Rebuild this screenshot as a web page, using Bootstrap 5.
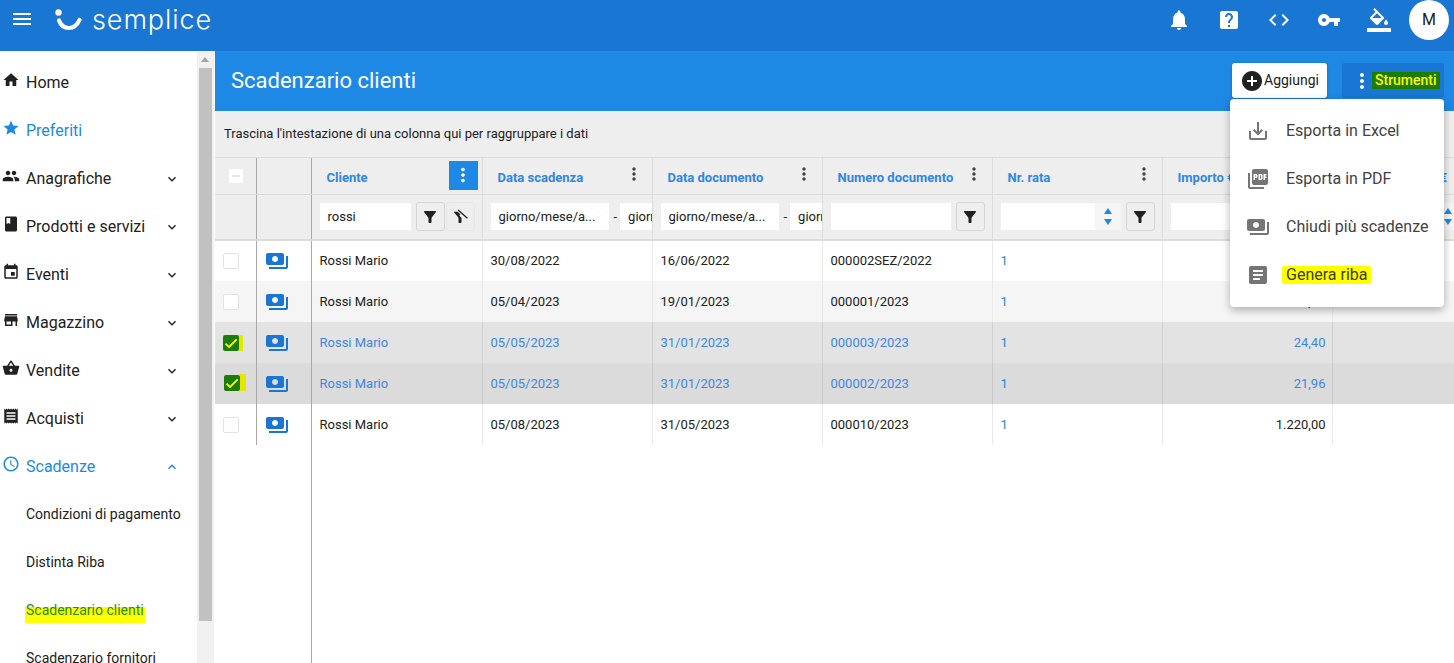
<!DOCTYPE html>
<html lang="it">
<head>
<meta charset="utf-8">
<title>Scadenzario clienti</title>
<link href="https://cdn.jsdelivr.net/npm/bootstrap@5.3.0/dist/css/bootstrap.min.css" rel="stylesheet">
<style>
html,body{height:100%;overflow:hidden}
body{font-family:Roboto,"Liberation Sans",sans-serif;color:#212121;background:#fff;font-size:13px}
.ic{fill:currentColor;flex:none;display:block}
.shell{height:663px;width:1454px}
.topbar{height:51px;background:#1976d2;color:#fff;flex:none}
.burger{margin-left:10px;margin-right:21px;margin-top:-13px}
.logo-wrap{margin-top:-11px}
.logo-word{font-family:Inter,"Open Sans",sans-serif;font-weight:300;font-size:27px;line-height:1;letter-spacing:.9px;margin-left:9px;color:#fff;position:relative;top:-1px}
.top-icons{margin-top:-12px}
.top-ic{width:50px;display:flex;justify-content:center}
.avatar{width:40px;height:40px;border-radius:50%;background:#fff;color:#212121;font-size:16px;margin:-12px 5px 0 5px;flex:none}
.side{width:215px;flex:none;position:relative;overflow:hidden;background:#fff}
.side-list{padding-top:7px;width:197px}
.side-it{height:48px;display:flex;align-items:center;font-size:16px;color:#212121;padding-left:2px;position:relative}
.side-it svg.lead{margin-top:-4px}
.side-it .lbl{margin-left:6px;position:relative;top:1px}
.side-it.act{color:#1e88e5}
.side-it .chev{position:absolute;left:164px;top:17px}
.sub-it{height:48px;display:flex;align-items:center;font-size:14px;padding-left:26px}
.hl-side{align-self:flex-start;margin-top:17px;height:20px;line-height:14px;padding:0 1px;margin-left:-1px;background:linear-gradient(transparent 4px,#ffff00 4px);color:#2a8a2a}
.sbar{position:absolute;left:197px;top:0;bottom:0;width:17px;background:#f1f1f1}
.sthumb{position:absolute;left:2px;right:2px;top:17px;height:553px;background:#c1c1c1}
.sarrow{position:absolute;left:4px;top:6px;width:0;height:0;border-left:4px solid transparent;border-right:4px solid transparent;border-bottom:5px solid #a3a3a3}
.main{min-width:0;position:relative}
.titlebar{height:60px;background:#1e88e5;color:#fff;flex:none;padding:0 10px 0 16px}
.titlebar h1{font-size:22px;font-weight:400;margin:0}
.btn-add{width:95px;height:35px;background:#fff;color:#212121;border:0;border-radius:3px;font-size:14px;padding:0 0 0 9px;box-shadow:0 1px 3px rgba(0,0,0,.25);margin-right:15px}
.btn-str{width:102px;height:35px;background:#1976d2;color:#fff;border:0;border-radius:3px;font-size:14px;padding:0 0 0 8px}
.hl-str{background:#1d7c02;color:#ffff00;padding:1px 3px;line-height:15px;margin-left:-2px;font-weight:500}
.grouping{height:47px;background:#eee;flex:none;padding-left:9px;font-size:13px;color:#212121;border-bottom:1px solid #dcdcdc}
.grid-wrap{min-height:0;overflow:hidden;width:1239px}
.gridt{table-layout:fixed;width:1287px;margin:0;border-collapse:collapse;font-size:13px;--bs-table-bg:transparent;flex:none}
.gridt td,.gridt th{padding:0;border:0;border-right:1px solid #e9e9e9;vertical-align:middle;white-space:nowrap;overflow:hidden;box-shadow:none}
.gridt thead th{background:#eee;border-right:1px solid #dcdcdc;border-bottom:1px solid #dcdcdc;color:#2f86e5;font-weight:700;font-size:13px}
.gridt .r-h1{height:36px}
.gridt .r-h2{height:46px}
.gridt .r-h2 th{border-bottom:2px solid #dcdcdc}
.gridt tbody tr{height:41px}
.gridt td.fr1,.gridt th.fr1,.gridt td.fr2,.gridt th.fr2{border-right:1px solid #a9a9a9}
.gridt td.tx{padding-left:8px}
.gridt td.num{padding-right:6px;text-align:right}
.gridt tr.r-w td{background:#fff;color:#212121}
.gridt tr.r-a td{background:#f5f5f5;color:#212121}
.gridt tr.r-s td{background:#e3e3e3;color:#3f86e0;border-right-color:#d0d0d0}
.gridt tr.r-t td{background:#dbdbdb;color:#3f86e0;border-right-color:#c9c9c9}
.gridt tr td.rata{color:#1e88e5}
.gridt tr td.fr1,.gridt tr td.fr2{border-right-color:#a9a9a9}
.hd{height:35px;padding:3px 0 0 15px}
.hd-kebab{width:30px;height:30px;color:#424242;margin-right:3px;position:relative;top:-3px}
.hd-kebab.on{background:#1e88e5;color:#fff;top:-2px;width:29px;height:29px;margin-right:4px}
.flt{height:44px;padding:0 8px;gap:5px;color:#212121}
.f-in{height:27px;background:#fff;border:0;font-weight:400;font-size:13px;line-height:27px;padding-left:8px;color:#212121;flex:none;overflow:hidden}
.f-btn{width:29px;height:29px;border:1px solid #d5d5d5;border-radius:3px;background:#eee;color:#212121;flex:none}
.f-btn.off{border-color:#e6e6e6;margin-left:-4px}
.spin{width:26px;height:27px;background:#f5f5f5;margin-left:-5px;flex:none;gap:5px}
.tri-u{width:0;height:0;border-left:4px solid transparent;border-right:4px solid transparent;border-bottom:6px solid #1e88e5}
.tri-d{width:0;height:0;border-left:4px solid transparent;border-right:4px solid transparent;border-top:6px solid #1e88e5}
.dash{font-weight:400;margin-right:-2px}
.cb{width:16px;height:16px;border:1px solid #e3e3e3;border-radius:2px;background:#fff;display:block;margin:0 auto 0 8px}
.cb-h{width:14px;height:14px;border:0;margin-left:14px;position:relative}
.cb-h::after{content:"";position:absolute;left:3px;right:3px;top:6px;height:2px;background:#e8e8e8}
.cb-on{position:relative;border:0;background:#1d7c02;width:16px;height:16px;color:#ff0}
.cb-on::after{content:"";position:absolute;left:100%;top:0;width:4px;bottom:0;background:#e6e600}
.cb-on.wide{margin-left:9px;top:-1px}
.cb-on.wide::after{width:6px;top:-1px}
.cash{color:#1976d2;margin-left:8px}
.fill{width:97px;flex:1;border-right:1px solid #a9a9a9;background:#fff}
.tools-menu{position:absolute;left:1015px;top:48px;width:214px;height:208px;background:#fff;border-radius:4px;box-shadow:0 3px 8px rgba(0,0,0,.3);padding-top:8px;z-index:5}
.tm-it{height:48px;display:flex;align-items:center;font-size:16px;color:#424242;padding-left:16px}
.tm-it svg{color:#757575;margin-right:16px}
.hl-rib{background:#ffff00;padding:0 4px;margin-left:-4px;border-radius:2px;line-height:18px;color:#3d3d00}
</style>
</head>
<body>
<svg width="0" height="0" class="position-absolute">
<defs>
<symbol id="i-menu" viewBox="0 0 24 24"><path d="M3 18h18v-2H3v2zm0-5h18v-2H3v2zm0-7v2h18V6H3z"/></symbol>
<symbol id="i-home" viewBox="0 0 24 24"><path d="M10 20v-6h4v6h5v-8h3L12 3 2 12h3v8z"/></symbol>
<symbol id="i-star" viewBox="0 0 24 24"><path d="M12 17.27L18.18 21l-1.64-7.03L22 9.24l-7.19-.61L12 2 9.19 8.63 2 9.24l5.46 4.73L5.82 21z"/></symbol>
<symbol id="i-people" viewBox="0 0 24 24"><path d="M16 11c1.66 0 2.99-1.34 2.99-3S17.66 5 16 5c-1.66 0-3 1.34-3 3s1.34 3 3 3zm-8 0c1.66 0 2.99-1.34 2.99-3S9.66 5 8 5C6.34 5 5 6.34 5 8s1.34 3 3 3zm0 2c-2.33 0-7 1.17-7 3.5V19h14v-2.5c0-2.33-4.67-3.5-7-3.5zm8 0c-.29 0-.62.02-.97.05 1.16.84 1.97 1.97 1.97 3.45V19h6v-2.5c0-2.33-4.67-3.5-7-3.5z"/></symbol>
<symbol id="i-book" viewBox="0 0 24 24"><path d="M18 2H6c-1.1 0-2 .9-2 2v16c0 1.1.9 2 2 2h12c1.1 0 2-.9 2-2V4c0-1.1-.9-2-2-2zM6 4h5v8l-2.5-1.5L6 12V4z"/></symbol>
<symbol id="i-event" viewBox="0 0 24 24"><path d="M17 12h-5v5h5v-5zM16 1v2H8V1H6v2H5c-1.11 0-1.99.9-1.99 2L3 19c0 1.1.89 2 2 2h14c1.1 0 2-.9 2-2V5c0-1.1-.9-2-2-2h-1V1h-2zm3 18H5V8h14v11z"/></symbol>
<symbol id="i-store" viewBox="0 0 24 24"><path d="M20 4H4v2h16V4zm1 10v-2l-1-5H4l-1 5v2h1v6h10v-6h4v6h2v-6h1zm-9 4H6v-4h6v4z"/></symbol>
<symbol id="i-basket" viewBox="0 0 24 24"><path d="M17.21 9l-4.38-6.56c-.19-.28-.51-.42-.83-.42-.32 0-.64.14-.83.43L6.79 9H2c-.55 0-1 .45-1 1 0 .09.01.18.04.27l2.54 9.27c.23.84 1 1.46 1.92 1.46h13c.92 0 1.69-.62 1.93-1.46l2.54-9.27L23 10c0-.55-.45-1-1-1h-4.79zM9 9l3-4.4L15 9H9zm3 8c-1.1 0-2-.9-2-2s.9-2 2-2 2 .9 2 2-.9 2-2 2z"/></symbol>
<symbol id="i-receipt" viewBox="0 0 24 24"><path d="M18 17H6v-2h12v2zm0-4H6v-2h12v2zm0-4H6V7h12v2zM3 22l1.5-1.5L6 22l1.5-1.5L9 22l1.5-1.5L12 22l1.5-1.5L15 22l1.5-1.5L18 22l1.5-1.5L21 22V2l-1.5 1.5L18 2l-1.5 1.5L15 2l-1.5 1.5L12 2l-1.5 1.5L9 2 7.5 3.5 6 2 4.5 3.5 3 2v20z"/></symbol>
<symbol id="i-clock" viewBox="0 0 24 24"><path d="M11.99 2C6.47 2 2 6.48 2 12s4.47 10 9.99 10C17.52 22 22 17.52 22 12S17.52 2 11.99 2zM12 20c-4.42 0-8-3.58-8-8s3.58-8 8-8 8 3.58 8 8-3.58 8-8 8zm.5-13H11v6l5.25 3.15.75-1.23-4.5-2.67z"/></symbol>
<symbol id="i-more" viewBox="0 0 24 24"><path d="M16.59 8.59L12 13.17 7.41 8.59 6 10l6 6 6-6z"/></symbol>
<symbol id="i-less" viewBox="0 0 24 24"><path d="M12 8l-6 6 1.41 1.41L12 10.83l4.59 4.58L18 14z"/></symbol>
<symbol id="i-bell" viewBox="0 0 24 24"><path d="M12 22c1.1 0 2-.9 2-2h-4c0 1.1.89 2 2 2zm6-6v-5c0-3.07-1.64-5.64-4.5-6.32V4c0-.83-.67-1.5-1.5-1.5s-1.5.67-1.5 1.5v.68C7.63 5.36 6 7.92 6 11v5l-2 2v1h16v-1l-2-2z"/></symbol>
<symbol id="i-help" viewBox="0 0 24 24"><path d="M19 3H5c-1.1 0-2 .9-2 2v14c0 1.1.9 2 2 2h14c1.1 0 2-.9 2-2V5c0-1.1-.9-2-2-2zm-6 16h-2v-2h2v2zm2.07-7.75l-.9.92C13.45 12.9 13 13.5 13 15h-2v-.5c0-1.1.45-2.1 1.17-2.83l1.24-1.26c.37-.36.59-.86.59-1.41 0-1.1-.9-2-2-2s-2 .9-2 2H8c0-2.21 1.79-4 4-4s4 1.79 4 4c0 .88-.36 1.68-.93 2.25z"/></symbol>
<symbol id="i-code" viewBox="0 0 24 24"><path d="M9.4 16.6L4.8 12l4.6-4.6L8 6l-6 6 6 6 1.4-1.4zm5.2 0l4.6-4.6-4.6-4.6L16 6l6 6-6 6-1.4-1.4z"/></symbol>
<symbol id="i-key" viewBox="0 0 24 24"><path d="M12.65 10C11.83 7.67 9.61 6 7 6c-3.31 0-6 2.69-6 6s2.69 6 6 6c2.61 0 4.83-1.67 5.65-4H17v4h4v-4h2v-4H12.65zM7 14c-1.1 0-2-.9-2-2s.9-2 2-2 2 .9 2 2-.9 2-2 2z"/></symbol>
<symbol id="i-fill" viewBox="0 0 24 24"><path d="M16.56 8.94L7.62 0 6.21 1.41l2.38 2.38-5.15 5.15c-.59.59-.59 1.54 0 2.12l5.5 5.5c.29.29.68.44 1.06.44s.77-.15 1.06-.44l5.5-5.5c.59-.58.59-1.53 0-2.12zM5.21 10L10 5.21 14.79 10H5.21zM19 11.5s-2 2.17-2 3.5c0 1.1.9 2 2 2s2-.9 2-2c0-1.33-2-3.5-2-3.5z"/><path d="M0 20h24v4H0z"/></symbol>
<symbol id="i-add" viewBox="0 0 24 24"><path d="M12 2C6.48 2 2 6.48 2 12s4.48 10 10 10 10-4.48 10-10S17.52 2 12 2zm5 11h-4v4h-2v-4H7v-2h4V7h2v4h4v2z"/></symbol>
<symbol id="i-kebab" viewBox="0 0 24 24"><path d="M12 8c1.1 0 2-.9 2-2s-.9-2-2-2-2 .9-2 2 .9 2 2 2zm0 2c-1.1 0-2 .9-2 2s.9 2 2 2 2-.9 2-2-.9-2-2-2zm0 6c-1.1 0-2 .9-2 2s.9 2 2 2 2-.9 2-2-.9-2-2-2z"/></symbol>
<symbol id="i-filter" viewBox="0 0 24 24"><path d="M4.25 5.61C6.27 8.2 10 13 10 13v6c0 .55.45 1 1 1h2c.55 0 1-.45 1-1v-6s3.72-4.8 5.74-7.39C20.25 4.95 19.78 4 18.95 4H5.04c-.83 0-1.3.95-.79 1.61z"/></symbol>
<symbol id="i-filter-off" viewBox="0 0 24 24"><path d="M3.500 5H9l3.500 3.500L11 10l3 3v6c0 .55-.45 1-1 1h-2c-.55 0-1-.45-1-1v-6z"/><path d="M10 2l12.500 11-1.200 1.400L8.800 3.400z"/></symbol>
<symbol id="i-save" viewBox="0 0 24 24"><path d="M19 12v7H5v-7H3v7c0 1.1.9 2 2 2h14c1.1 0 2-.9 2-2v-7h-2zm-6 .67l2.59-2.58L17 11.5l-5 5-5-5 1.41-1.41L11 12.67V3h2z"/></symbol>
<symbol id="i-pdf" viewBox="0 0 24 24"><path d="M20 2H8c-1.1 0-2 .9-2 2v12c0 1.1.9 2 2 2h12c1.1 0 2-.9 2-2V4c0-1.1-.9-2-2-2zm-8.5 7.5c0 .83-.67 1.5-1.5 1.5H9v2H7.5V7H10c.83 0 1.5.67 1.5 1.5v1zm5 2c0 .83-.67 1.5-1.5 1.5h-2.5V7H15c.83 0 1.5.67 1.5 1.5v3zm4-3H19v1h1.5V11H19v2h-1.5V7h3v1.5zM9 9.5h1v-1H9v1zM4 6H2v14c0 1.1.9 2 2 2h14v-2H4V6zm10 5.5h1v-3h-1v3z"/></symbol>
<symbol id="i-cash" viewBox="0 0 24 24"><path d="M19 14V6c0-1.1-.9-2-2-2H3c-1.1 0-2 .9-2 2v8c0 1.1.9 2 2 2h14c1.1 0 2-.9 2-2zm-9-1c-1.66 0-3-1.34-3-3s1.34-3 3-3 3 1.34 3 3-1.34 3-3 3zm13-6v11c0 1.1-.9 2-2 2H4v-2h17V7h2z"/></symbol>
<symbol id="i-article" viewBox="0 0 24 24"><path d="M19 3H5c-1.1 0-2 .9-2 2v14c0 1.1.9 2 2 2h14c1.1 0 2-.9 2-2V5c0-1.1-.9-2-2-2zm-5 14H7v-2h7v2zm3-4H7v-2h10v2zm0-4H7V7h10v2z"/></symbol>
<symbol id="i-check" viewBox="0 0 24 24"><path d="M9 16.2L4.8 12l-1.9 1.9L9 20 21.5 7.5 19.6 5.6z"/></symbol>
</defs>
</svg>
<div class="shell d-flex flex-column">
  <header class="topbar d-flex align-items-center">
    <svg class="ic burger" width="24" height="24"><use href="#i-menu"/></svg>
    <div class="logo-wrap d-flex align-items-center">
      <svg width="28" height="22" viewBox="0 0 28 22"><circle cx="3.500" cy="3.500" r="3.200" fill="#fff"/><path d="M4 11.500c2 5.500 6 7.500 10 7.500s8-2.500 10.500-8" fill="none" stroke="#fff" stroke-width="4.200" stroke-linecap="round"/></svg>
      <span class="logo-word">semplice</span>
    </div>
    <div class="top-icons d-flex align-items-center ms-auto">
      <div class="top-ic"><svg class="ic" width="24" height="24"><use href="#i-bell"/></svg></div>
      <div class="top-ic"><svg class="ic" width="24" height="24"><use href="#i-help"/></svg></div>
      <div class="top-ic"><svg class="ic" width="24" height="24"><use href="#i-code"/></svg></div>
      <div class="top-ic"><svg class="ic" width="24" height="24"><use href="#i-key"/></svg></div>
      <div class="top-ic"><svg class="ic" width="24" height="24"><use href="#i-fill"/></svg></div>
    </div>
    <div class="avatar d-flex align-items-center justify-content-center">M</div>
  </header>
  <div class="d-flex flex-grow-1" style="min-height:0">
    <nav class="side">
      <div class="side-list">
        <div class="side-it"><svg class="ic lead" width="18" height="18"><use href="#i-home"/></svg><span class="lbl">Home</span></div>
        <div class="side-it act"><svg class="ic lead" width="18" height="18"><use href="#i-star"/></svg><span class="lbl">Preferiti</span></div>
        <div class="side-it"><svg class="ic lead" width="18" height="18"><use href="#i-people"/></svg><span class="lbl">Anagrafiche</span><svg class="ic chev" width="16" height="16"><use href="#i-more"/></svg></div>
        <div class="side-it"><svg class="ic lead" width="18" height="18"><use href="#i-book"/></svg><span class="lbl">Prodotti e servizi</span><svg class="ic chev" width="16" height="16"><use href="#i-more"/></svg></div>
        <div class="side-it"><svg class="ic lead" width="18" height="18"><use href="#i-event"/></svg><span class="lbl">Eventi</span><svg class="ic chev" width="16" height="16"><use href="#i-more"/></svg></div>
        <div class="side-it"><svg class="ic lead" width="18" height="18"><use href="#i-store"/></svg><span class="lbl">Magazzino</span><svg class="ic chev" width="16" height="16"><use href="#i-more"/></svg></div>
        <div class="side-it"><svg class="ic lead" width="18" height="18"><use href="#i-basket"/></svg><span class="lbl">Vendite</span><svg class="ic chev" width="16" height="16"><use href="#i-more"/></svg></div>
        <div class="side-it"><svg class="ic lead" width="18" height="18"><use href="#i-receipt"/></svg><span class="lbl">Acquisti</span><svg class="ic chev" width="16" height="16"><use href="#i-more"/></svg></div>
        <div class="side-it act"><svg class="ic lead" width="18" height="18"><use href="#i-clock"/></svg><span class="lbl">Scadenze</span><svg class="ic chev" width="16" height="16"><use href="#i-less"/></svg></div>
        <div class="sub-it">Condizioni di pagamento</div>
        <div class="sub-it">Distinta Riba</div>
        <div class="sub-it"><span class="hl-side">Scadenzario clienti</span></div>
        <div class="sub-it">Scadenzario fornitori</div>
      </div>
      <div class="sbar"><div class="sarrow"></div><div class="sthumb"></div></div>
    </nav>
    <main class="main flex-grow-1 d-flex flex-column">
      <div class="titlebar d-flex align-items-center">
        <h1>Scadenzario clienti</h1>
        <div class="ms-auto d-flex align-items-center" style="margin-top:-1px">
          <button class="btn-add d-flex align-items-center" type="button"><svg class="ic" width="24" height="24" style="margin-left:-1px"><use href="#i-add"/></svg>Aggiungi</button>
          <button class="btn-str d-flex align-items-center" type="button"><svg class="ic" width="24" height="24"><use href="#i-kebab"/></svg><span class="hl-str">Strumenti</span></button>
        </div>
      </div>
      <div class="grouping d-flex align-items-center">Trascina l'intestazione di una colonna qui per raggruppare i dati</div>
      <div class="grid-wrap d-flex flex-column flex-grow-1">
        <table class="table gridt">
          <colgroup><col style="width:41px"><col style="width:55px"><col style="width:171px"><col style="width:170px"><col style="width:170px"><col style="width:170px"><col style="width:170px"><col style="width:170px"><col style="width:170px"></colgroup>
          <thead>
            <tr class="r-h1">
              <th class="fr1"><span class="cb cb-h"></span></th>
              <th class="fr2"></th>
              <th><div class="hd d-flex align-items-center justify-content-between"><span>Cliente</span><span class="hd-kebab on d-flex align-items-center justify-content-center"><svg class="ic" width="22" height="22"><use href="#i-kebab"/></svg></span></div></th>
              <th><div class="hd d-flex align-items-center justify-content-between"><span>Data scadenza</span><span class="hd-kebab d-flex align-items-center justify-content-center"><svg class="ic" width="20" height="20"><use href="#i-kebab"/></svg></span></div></th>
              <th><div class="hd d-flex align-items-center justify-content-between"><span>Data documento</span><span class="hd-kebab d-flex align-items-center justify-content-center"><svg class="ic" width="20" height="20"><use href="#i-kebab"/></svg></span></div></th>
              <th><div class="hd d-flex align-items-center justify-content-between"><span>Numero documento</span><span class="hd-kebab d-flex align-items-center justify-content-center"><svg class="ic" width="20" height="20"><use href="#i-kebab"/></svg></span></div></th>
              <th><div class="hd d-flex align-items-center justify-content-between"><span>Nr. rata</span><span class="hd-kebab d-flex align-items-center justify-content-center"><svg class="ic" width="20" height="20"><use href="#i-kebab"/></svg></span></div></th>
              <th><div class="hd d-flex align-items-center"><span>Importo €</span></div></th>
              <th><div class="hd d-flex align-items-center"><span style="margin-left:56px">Saldo €</span></div></th>
            </tr>
            <tr class="r-h2">
              <th class="fr1"></th>
              <th class="fr2"></th>
              <th><div class="flt d-flex align-items-center"><span class="f-in" style="width:91px">rossi</span><span class="f-btn d-flex align-items-center justify-content-center"><svg class="ic" width="18" height="18"><use href="#i-filter"/></svg></span><span class="f-btn off d-flex align-items-center justify-content-center"><svg class="ic" width="18" height="18"><use href="#i-filter-off"/></svg></span></div></th>
              <th><div class="flt d-flex align-items-center"><span class="f-in" style="width:118px">giorno/mese/a...</span><span class="dash">-</span><span class="f-in" style="width:60px">giorno</span></div></th>
              <th><div class="flt d-flex align-items-center"><span class="f-in" style="width:118px">giorno/mese/a...</span><span class="dash">-</span><span class="f-in" style="width:60px">giorno</span></div></th>
              <th><div class="flt d-flex align-items-center"><span class="f-in" style="width:120px"></span><span class="f-btn d-flex align-items-center justify-content-center"><svg class="ic" width="18" height="18"><use href="#i-filter"/></svg></span></div></th>
              <th><div class="flt d-flex align-items-center"><span class="f-in" style="width:94px"></span><span class="spin d-flex flex-column align-items-center justify-content-center"><span class="tri-u"></span><span class="tri-d"></span></span><span class="f-btn d-flex align-items-center justify-content-center"><svg class="ic" width="18" height="18"><use href="#i-filter"/></svg></span></div></th>
              <th><div class="flt d-flex align-items-center"><span class="f-in" style="width:94px"></span><span class="spin d-flex flex-column align-items-center justify-content-center"><span class="tri-u"></span><span class="tri-d"></span></span></div></th>
              <th><div class="flt d-flex align-items-center"><span class="f-in" style="width:94px"></span><span class="spin d-flex flex-column align-items-center justify-content-center"><span class="tri-u"></span><span class="tri-d"></span></span></div></th>
            </tr>
          </thead>
          <tbody>
            <tr class="r-w"><td class="fr1"><span class="cb"></span></td><td class="fr2"><svg class="ic cash" width="24" height="24"><use href="#i-cash"/></svg></td><td class="tx">Rossi Mario</td><td class="tx">30/08/2022</td><td class="tx">16/06/2022</td><td class="tx">000002SEZ/2022</td><td class="tx rata">1</td><td class="num">61,00</td><td></td></tr>
            <tr class="r-a"><td class="fr1"><span class="cb"></span></td><td class="fr2"><svg class="ic cash" width="24" height="24"><use href="#i-cash"/></svg></td><td class="tx">Rossi Mario</td><td class="tx">05/04/2023</td><td class="tx">19/01/2023</td><td class="tx">000001/2023</td><td class="tx rata">1</td><td class="num">36,60</td><td></td></tr>
            <tr class="r-s"><td class="fr1"><span class="cb cb-on"><svg class="ic" width="16" height="16"><use href="#i-check"/></svg></span></td><td class="fr2"><svg class="ic cash" width="24" height="24"><use href="#i-cash"/></svg></td><td class="tx">Rossi Mario</td><td class="tx">05/05/2023</td><td class="tx">31/01/2023</td><td class="tx">000003/2023</td><td class="tx rata">1</td><td class="num">24,40</td><td></td></tr>
            <tr class="r-t"><td class="fr1"><span class="cb cb-on wide"><svg class="ic" width="16" height="16"><use href="#i-check"/></svg></span></td><td class="fr2"><svg class="ic cash" width="24" height="24"><use href="#i-cash"/></svg></td><td class="tx">Rossi Mario</td><td class="tx">05/05/2023</td><td class="tx">31/01/2023</td><td class="tx">000002/2023</td><td class="tx rata">1</td><td class="num">21,96</td><td></td></tr>
            <tr class="r-w"><td class="fr1"><span class="cb"></span></td><td class="fr2"><svg class="ic cash" width="24" height="24"><use href="#i-cash"/></svg></td><td class="tx">Rossi Mario</td><td class="tx">05/08/2023</td><td class="tx">31/05/2023</td><td class="tx">000010/2023</td><td class="tx rata">1</td><td class="num">1.220,00</td><td></td></tr>
          </tbody>
        </table>
        <div class="fill"></div>
      </div>
      <div class="tools-menu">
        <div class="tm-it"><svg class="ic" width="24" height="24"><use href="#i-save"/></svg>Esporta in Excel</div>
        <div class="tm-it"><svg class="ic" width="24" height="24"><use href="#i-pdf"/></svg>Esporta in PDF</div>
        <div class="tm-it"><svg class="ic" width="24" height="24"><use href="#i-cash"/></svg>Chiudi più scadenze</div>
        <div class="tm-it"><svg class="ic" width="24" height="24"><use href="#i-article"/></svg><span class="hl-rib">Genera riba</span></div>
      </div>
    </main>
  </div>
</div>
<script src="https://cdn.jsdelivr.net/npm/bootstrap@5.3.0/dist/js/bootstrap.bundle.min.js"></script>
</body>
</html>
